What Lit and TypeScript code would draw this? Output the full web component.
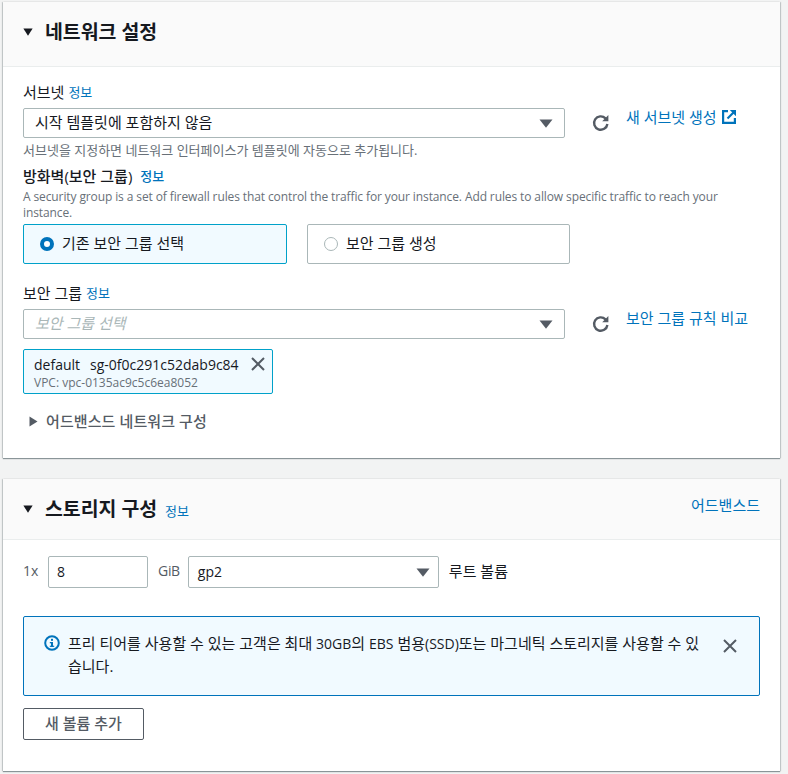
import { LitElement, html, css, svg } from "lit";
import { customElement } from "lit/decorators.js";

const caretDown = (c: string, w = 14, h = 9) => html`<svg class="caret" width="${w}" height="${h}" viewBox="0 0 14 9" preserveAspectRatio="none"><path d="M0.5 0.5h13L7 8.8z" fill="${c}"/></svg>`;
const refresh = html`<svg class="refresh" width="18" height="18" viewBox="0 0 18 18" fill="none" stroke="#545b64" stroke-width="2.4"><path d="M15.4 10a6.7 6.7 0 1 1-1.9-5.7L15 6"/><path d="M16.4 1v6.2h-6.2z" fill="#545b64" stroke="none"/></svg>`;
const xIcon = html`<svg width="14" height="14" viewBox="0 0 14 14" stroke="#545b64" stroke-width="2" fill="none"><path d="M1 1l12 12M13 1L1 13"/></svg>`;
const external = html`<svg class="ext" width="14" height="14" viewBox="0 0 14 14" fill="none" stroke="#0073bb" stroke-width="2.2"><path d="M6 1.2H1.1v11.7h11.8V8"/><path d="M5.5 8.5L12 2"/><path d="M7.8 0h6.2v6.2z" fill="#0073bb" stroke="none"/></svg>`;
const info = svg`<circle cx="8" cy="8" r="6.8" fill="none" stroke="#0073bb" stroke-width="2"/><rect x="7" y="7" width="2" height="4.8" fill="#0073bb"/><rect x="7" y="3.8" width="2" height="2" fill="#0073bb"/><rect x="5.8" y="7" width="2" height="1.3" fill="#0073bb"/><rect x="5.8" y="10.7" width="4.4" height="1.2" fill="#0073bb"/>`;

@customElement("app-root")
export class AppRoot extends LitElement {
  static styles = css`
    :host {
      display: block;
      width: 788px;
      height: 774px;
      overflow: hidden;
      background: #f2f3f3;
      color: #16191f;
      font-family: "Open Sans", "Noto Sans CJK KR", sans-serif;
      font-size: 15px;
      line-height: 20px;
    }
    .en { font-size: 14px; }
    .page { padding: 2px 8px 0 3px; display: flex; flex-direction: column; gap: 21px; }
    .card {
      background: #fff;
      box-shadow: 0 1px 1px 0 rgba(0,28,36,.4), 1px 0 1px 0 rgba(0,28,36,.15), -1px 0 1px 0 rgba(0,28,36,.15);
    }
    .head {
      background: #fafafa;
      border-bottom: 1px solid #eaeded;
      display: flex;
      align-items: center;
      padding: 0 20px;
      box-sizing: border-box;
    }
    .head.net { height: 65px; padding-bottom: 4px; }
    .head.sto { height: 61px; }
    .head .caret { margin-right: 12px; flex: none; }
    .title { font-size: 19.4px; font-weight: 700; line-height: 24px; }
    .info { color: #0073bb; font-size: 13px; }
    .head .info { margin-left: 8px; margin-top: 3px; }
    .head .adv { margin-left: auto; color: #0073bb; font-size: 15px; margin-top: -8px; }
    .net-body { padding: 16px 20px 0; height: 391px; box-sizing: border-box; }
    .label { line-height: 20px; height: 20px; display: flex; gap: 4px; align-items: center; box-sizing: border-box; padding-bottom: 2px; }
    .label.bold { font-weight: 500; gap: 8px; }
    .hint { font-size: 13px; line-height: 16px; color: #687078; }
    .desc { font-size: 12px; line-height: 16px; color: #687078; letter-spacing: -0.11px; margin-top: 2px; }
    .row { display: flex; align-items: flex-start; margin-top: 5px; }
    .select {
      width: 542px;
      height: 30px;
      flex: none;
      box-sizing: border-box;
      border: 1px solid #aab7b8;
      border-radius: 2px;
      background: #fff;
      display: flex;
      align-items: center;
      justify-content: space-between;
      padding: 0 11px;
    }
    .select span { padding-bottom: 2px; }
    .select.ph span { color: #aab7b8; font-style: italic; }
    .refresh { margin: 6px 0 0 27px; flex: none; }
    .link { color: #0073bb; margin-left: 16px; display: flex; align-items: center; gap: 5px; white-space: nowrap; height: 20px; margin-top: -1px; }
    .tiles { display: flex; gap: 20px; margin-top: 3px; }
    .tile {
      box-sizing: border-box;
      height: 40px;
      border: 1px solid #aab7b8;
      border-radius: 2px;
      display: flex;
      align-items: center;
      padding-left: 16px;
      gap: 8px;
    }
    .tile span.t { padding-bottom: 2px; }
    .tile.on { width: 264px; border-color: #00a1c9; background: #f1faff; }
    .tile.off { width: 263px; }
    .radio { width: 14px; height: 14px; border-radius: 50%; box-sizing: border-box; flex: none; }
    .on .radio { border: 4px solid #0073bb; background: #fff; }
    .off .radio { border: 1px solid #aab7b8; background: #fff; }
    .token {
      width: 250px;
      height: 45px;
      box-sizing: border-box;
      margin-top: 10px;
      border: 1px solid #00a1c9;
      border-radius: 2px;
      background: #f1faff;
      position: relative;
      padding: 4px 10px;
      white-space: nowrap;
    }
    .token .main { display: flex; gap: 10px; line-height: 21px; font-size: 14px; }
    .token .sub { font-size: 12px; line-height: 15px; color: #687078; }
    .token svg { position: absolute; right: 7px; top: 7px; }
    .expand { display: flex; align-items: center; gap: 8px; margin: 17px 0 0 6px; color: #545b64; font-weight: 500; letter-spacing: 0.1px; }
    .sto-body { padding: 16px 20px 0; height: 231px; box-sizing: border-box; }
    .vol { display: flex; align-items: center; height: 32px; }
    .vol .x { color: #545b64; width: 25px; font-size: 14px; padding-bottom: 2px; }
    .input { width: 100px; height: 32px; box-sizing: border-box; border: 1px solid #aab7b8; border-radius: 2px; padding: 5px 8px; font-size: 14px; }
    .gib { color: #545b64; margin: 0 8px 0 10px; font-size: 14px; letter-spacing: -0.3px; padding-bottom: 2px; }
    .vol .select { width: 251px; height: 32px; padding: 0 8px 0 9px; font-size: 14px; }
    .vol .select span { padding-bottom: 0; }
    .root { margin-left: 10px; padding-bottom: 2px; }
    .alert {
      margin-top: 28px;
      height: 80px;
      box-sizing: border-box;
      border: 1px solid #0073bb;
      border-radius: 2px;
      background: #f1faff;
      padding: 15px 20px;
      display: flex;
    }
    .alert .ico { flex: none; margin: 3px 8px 0 0; }
    .alert .msg { flex: 1; line-height: 22px; white-space: nowrap; }
    .alert .x { flex: none; margin: 5px 2px 0 16px; }
    .btn {
      margin-top: 12px;
      width: 121px;
      height: 32px;
      box-sizing: border-box;
      border: 1px solid #545b64;
      border-radius: 2px;
      color: #545b64;
      font-weight: 500;
      display: flex;
      align-items: center;
      justify-content: center;
      padding-bottom: 2px;
    }
  `;

  render() {
    return html`
      <div class="page">
        <section class="card">
          <div class="head net">${caretDown("#16191f", 10, 8)}<span class="title">네트워크 설정</span></div>
          <div class="net-body">
            <div class="label">서브넷 <span class="info">정보</span></div>
            <div class="row">
              <div class="select"><span>시작 템플릿에 포함하지 않음</span>${caretDown("#545b64")}</div>
              ${refresh}
              <span class="link">새 서브넷 생성 ${external}</span>
            </div>
            <div class="hint" style="margin-top:4px">서브넷을 지정하면 네트워크 인터페이스가 템플릿에 자동으로 추가됩니다.</div>
            <div class="label bold" style="margin-top:9px">방화벽(보안 그룹) <span class="info">정보</span></div>
            <div class="desc">A security group is a set of firewall rules that control the traffic for your instance. Add rules to allow specific traffic to reach your instance.</div>
            <div class="tiles">
              <div class="tile on"><span class="radio"></span><span class="t">기존 보안 그룹 선택</span></div>
              <div class="tile off"><span class="radio"></span><span class="t">보안 그룹 생성</span></div>
            </div>
            <div class="label" style="margin-top:20px">보안 그룹 <span class="info">정보</span></div>
            <div class="row">
              <div class="select ph"><span>보안 그룹 선택</span>${caretDown("#545b64")}</div>
              ${refresh}
              <span class="link">보안 그룹 규칙 비교</span>
            </div>
            <div class="token">
              <div class="main"><span>default</span><span>sg-0f0c291c52dab9c84</span></div>
              <div class="sub">VPC: vpc-0135ac9c5c6ea8052</div>
              ${xIcon}
            </div>
            <div class="expand"><svg width="9" height="11" viewBox="0 0 9 11"><path d="M0.5 0.5v10l8-5z" fill="#545b64"/></svg>어드밴스드 네트워크 구성</div>
          </div>
        </section>
        <section class="card">
          <div class="head sto">${caretDown("#16191f", 10, 8)}<span class="title">스토리지 구성</span><span class="info">정보</span><span class="adv">어드밴스드</span></div>
          <div class="sto-body">
            <div class="vol">
              <span class="x">1x</span>
              <div class="input">8</div>
              <span class="gib">GiB</span>
              <div class="select"><span>gp2</span>${caretDown("#545b64")}</div>
              <span class="root">루트 볼륨</span>
            </div>
            <div class="alert">
              <svg class="ico" width="16" height="16" viewBox="0 0 16 16">${info}</svg>
              <div class="msg">프리 티어를 사용할 수 있는 고객은 최대 <span class="en">30GB</span>의 <span class="en">EBS</span> 범용<span class="en">(SSD)</span>또는 마그네틱 스토리지를 사용할 수 있<br />습니다.</div>
              <span class="x">${xIcon}</span>
            </div>
            <div class="btn">새 볼륨 추가</div>
          </div>
        </section>
      </div>
    `;
  }
}
